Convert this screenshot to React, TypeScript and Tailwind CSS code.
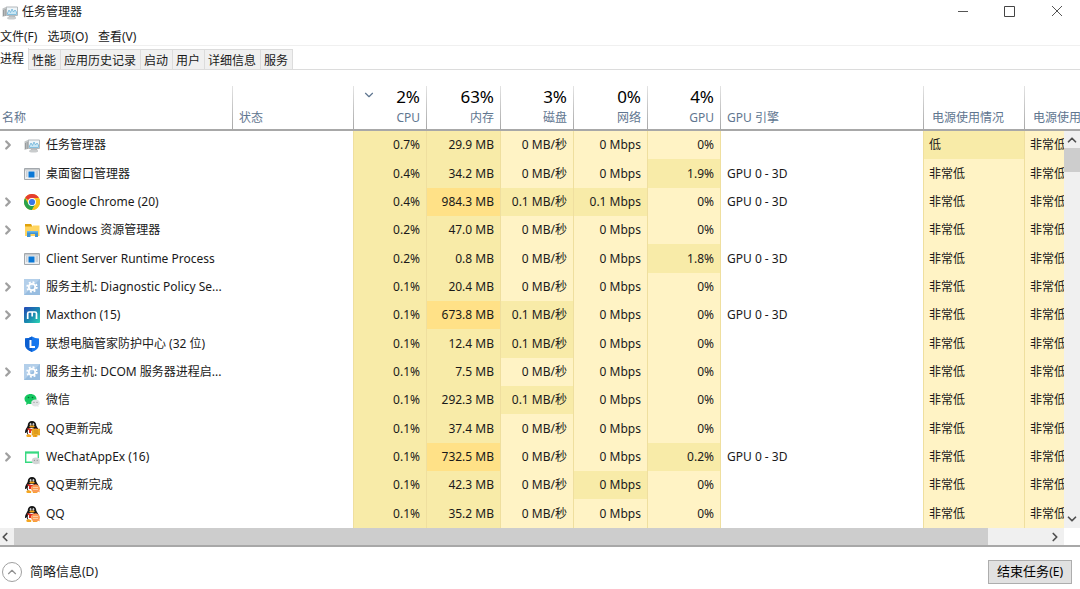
import { ReactNode } from "react";
import clsx from "clsx";
import { ChevronDown, ChevronLeft, ChevronRight, ChevronUp } from "lucide-react";

type Heat = "low" | "mid" | "high";

interface Process {
    name: string;
    icon: keyof typeof icons;
    expandable?: boolean;
    cpu: string;
    memory: string;
    disk?: string;
    network?: string;
    networkHeat?: Heat;
    gpu?: string;
    engine?: string;
    power?: string;
}

const heatClass: Record<Heat, string> = {
    low: "bg-[#fff3c5]",
    mid: "bg-[#f8eba8]",
    high: "bg-[#ffe187]",
};

const icons = {
    monitor: (
        <>
            <path d="M.5 4.500 5 2.500v9L.5 13z" fill="#c2c5c6" />
            <path d="M1.500 6v6M3.200 5v7" stroke="#8d9294" strokeWidth=".8" />
            <path d="M4.500 3h11v8.500h-11z" fill="#eef5f9" stroke="#b4b9bc" />
            <path d="M5.500 9 7 6l1.500 2.500L10 5l1.500 3 1.500-2 1.500 2v2.500h-9z" fill="#c9e6f4" stroke="#6db3d8" strokeWidth=".8" />
            <path d="M7 12h6l1 2.500H6z" fill="#b5b8ba" />
            <ellipse cx="9.500" cy="14" rx="4.500" ry="1.600" fill="#c9cccd" />
        </>
    ),
    app: (
        <>
            <path d="M.5 2.500h15v11H.5z" fill="#eceef0" stroke="#a3a8ad" />
            <path d="M1 3h14v1.500H1z" fill="#c5c9cc" />
            <path d="M4.500 5.500h6v6h-6z" fill="#0a78d6" />
            <path d="M2 6h1.500M2 8h1.500M2 10h1.500M11.500 6H14M11.500 8H14M11.500 10H14" stroke="#a9b3bc" />
        </>
    ),
    chrome: (
        <>
            <circle cx="8" cy="8" r="8" fill="#f9c41c" />
            <path d="M8 8 1.070 4A8 8 0 0 1 14.930 4H8z" fill="#e53e30" />
            <path d="M1.070 4A8 8 0 0 0 8 16l3.460-6L8 8 4.540 10z" fill="#2ba24c" />
            <path d="M8 4h6.930A8 8 0 0 1 8 16l3.460-6z" fill="#f9c41c" />
            <circle cx="8" cy="8" r="4" fill="#fff" />
            <circle cx="8" cy="8" r="3.100" fill="#3b78e7" />
        </>
    ),
    folder: (
        <>
            <path d="M1 2h6l1 1.500V6H1z" fill="#e0a20c" />
            <path d="M1 4.500h7L9 3.500h6.500V14H1z" fill="#ffd560" />
            <path d="M3 9h11v6h-3v-3H6.500v3H3z" fill="#3f93d3" />
            <path d="M3 9h11v1.500H3z" fill="#69b7ea" />
        </>
    ),
    gear: (
        <>
            <path d="M0 0h16v16H0z" fill="#b3cfea" />
            <path d="M0 16 16 0v16z" fill="#98bde0" />
            <circle cx="8" cy="8" r="3.200" fill="none" stroke="#fff" strokeWidth="1.700" />
            <circle cx="8" cy="8" r="4.800" fill="none" stroke="#fff" strokeWidth="1.800" strokeDasharray="1.885 1.885" />
        </>
    ),
    maxthon: (
        <>
            <defs>
                <linearGradient id="maxthon" x1="0" x2="1" y1="0" y2="1">
                    <stop stopColor="#2448b8" />
                    <stop offset=".55" stopColor="#198aae" />
                    <stop offset="1" stopColor="#2bd6b4" />
                </linearGradient>
            </defs>
            <rect width="16" height="16" rx="1" fill="url(#maxthon)" />
            <path d="M3.700 12V6.500Q3.700 5 5.200 5h5.800q1.500 0 1.500 1.500V12M8.200 5v4.500" fill="none" stroke="#fff" strokeWidth="1.700" />
        </>
    ),
    shield: (
        <>
            <path d="M8 .5Q11 2.500 15 2.500V8q0 5.500-7 8-7-2.500-7-8V2.500Q5 2.500 8 .5" fill="#1677ee" />
            <path d="M8 .5Q5 2.500 1 2.500V8q0 5.500 7 8z" fill="#0c5fd0" />
            <path d="M6.500 4v7H11" fill="none" stroke="#fff" strokeWidth="2" />
        </>
    ),
    wechat: (
        <>
            <path d="M6.500 2C3 2 .5 4.200.5 7q0 2.400 2 3.800L2 13l2.500-1.200q1 .3 2 .3c3.500 0 6-2.300 6-5.100S10 2 6.500 2" fill="#16c761" />
            <circle cx="4.500" cy="5.500" r=".8" fill="#0a6b35" />
            <circle cx="8.500" cy="5.500" r=".8" fill="#0a6b35" />
            <path d="M11.500 7.500C9 7.500 7.200 9 7.200 11s1.800 3.400 4.300 3.400l1.500-.2 1.700.8-.4-1.400q1.500-1 1.500-2.600c0-2-1.800-3.500-4.300-3.500" fill="#e1e3e4" />
            <circle cx="10" cy="10.300" r=".6" fill="#888" />
            <circle cx="13" cy="10.300" r=".6" fill="#888" />
        </>
    ),
    webview: (
        <>
            <path d="M9 13.200H1.700V3.500h12.600V9" fill="none" stroke="#37d980" strokeWidth="1.400" />
            <path d="M1 2.500h14v2H1z" fill="#37d980" />
            <ellipse cx="11.800" cy="11.800" rx="4" ry="3.400" fill="#d2d5d5" />
            <path d="m14 14 1.500 1.500V13z" fill="#d2d5d5" />
            <circle cx="10.400" cy="11.300" r=".6" fill="#8b8f8f" />
            <circle cx="13.200" cy="11.300" r=".6" fill="#8b8f8f" />
        </>
    ),
    qqFile: (
        <>
            <Penguin />
            <path d="M8 8h8v6h-3l-1.500 1.500V14H8z" fill="#f5b52b" stroke="#c98512" strokeWidth=".5" />
            <path d="M9.500 10h5M9.500 12h5" stroke="#b97609" strokeWidth=".8" />
        </>
    ),
    qqChat: (
        <>
            <Penguin />
            <ellipse cx="11.500" cy="11.500" rx="4.500" ry="4" fill="#fb9a55" />
            <path d="m13 14 3 1.500-1-3z" fill="#fb9a55" />
            <path d="M9 10.500h5M9 12.500h5" stroke="#ffd9b8" strokeWidth=".8" />
        </>
    ),
};

function Penguin() {
    return (
        <>
            <path d="M8 0C5.500 0 3.700 2 3.700 4.800 3 6.500.8 9 1 11.500c.2 1.200 1.200 0 1.500-.5q.5 2 1.500 3h7.500q1.500-1 2-3c.5.600 1.300 1.200 1.500.3.200-2.600-2-5-2.700-6.500C12.300 2 10.500 0 8 0" fill="#151515" />
            <ellipse cx="7.500" cy="11" rx="3.800" ry="4" fill="#fff" />
            <ellipse cx="6.600" cy="3.400" rx=".9" ry="1.300" fill="#ccc" />
            <ellipse cx="9.400" cy="3.400" rx=".9" ry="1.300" fill="#ccc" />
            <ellipse cx="8" cy="5.600" rx="2.800" ry="1" fill="#f5a51d" />
            <path d="M3.500 7q4.500 2 9 0v2q-3 1-5.500.7V12H5V9.200L3.300 8.500z" fill="#e02b22" />
            <path d="M2.500 14q2-1.500 5 .5L7 16H3.500Q1.500 15.500 2.500 14M8.500 14.500q3-1.500 5 0 .5 1.500-1.500 1.500H9z" fill="#f5a51d" />
        </>
    );
}

const processes: Process[] = [
    { name: "任务管理器", icon: "monitor", expandable: true, cpu: "0.7%", memory: "29.9 MB", power: "低" },
    { name: "桌面窗口管理器", icon: "app", cpu: "0.4%", memory: "34.2 MB", gpu: "1.9%", engine: "GPU 0 - 3D" },
    { name: "Google Chrome (20)", icon: "chrome", expandable: true, cpu: "0.4%", memory: "984.3 MB", disk: "0.1 MB/秒", network: "0.1 Mbps", networkHeat: "mid", engine: "GPU 0 - 3D" },
    { name: "Windows 资源管理器", icon: "folder", expandable: true, cpu: "0.2%", memory: "47.0 MB" },
    { name: "Client Server Runtime Process", icon: "app", cpu: "0.2%", memory: "0.8 MB", gpu: "1.8%", engine: "GPU 0 - 3D" },
    { name: "服务主机: Diagnostic Policy Se...", icon: "gear", expandable: true, cpu: "0.1%", memory: "20.4 MB" },
    { name: "Maxthon (15)", icon: "maxthon", expandable: true, cpu: "0.1%", memory: "673.8 MB", disk: "0.1 MB/秒", engine: "GPU 0 - 3D" },
    { name: "联想电脑管家防护中心 (32 位)", icon: "shield", cpu: "0.1%", memory: "12.4 MB", disk: "0.1 MB/秒" },
    { name: "服务主机: DCOM 服务器进程启...", icon: "gear", expandable: true, cpu: "0.1%", memory: "7.5 MB" },
    { name: "微信", icon: "wechat", cpu: "0.1%", memory: "292.3 MB", disk: "0.1 MB/秒" },
    { name: "QQ更新完成", icon: "qqFile", cpu: "0.1%", memory: "37.4 MB" },
    { name: "WeChatAppEx (16)", icon: "webview", expandable: true, cpu: "0.1%", memory: "732.5 MB", gpu: "0.2%", engine: "GPU 0 - 3D" },
    { name: "QQ更新完成", icon: "qqChat", cpu: "0.1%", memory: "42.3 MB", networkHeat: "mid" },
    { name: "QQ", icon: "qqChat", cpu: "0.1%", memory: "35.2 MB" },
];

const menus = ["文件(F)", "选项(O)", "查看(V)"];
const tabs = ["进程", "性能", "应用历史记录", "启动", "用户", "详细信息", "服务"];

function Icon({ name }: { name: keyof typeof icons }) {
    return (
        <svg viewBox="0 0 16 16" className="size-4 shrink-0" aria-hidden="true">
            {icons[name]}
        </svg>
    );
}

function HeaderCell({ label, total, sorted, className }: { label: string; total?: string; sorted?: boolean; className?: string }) {
    return (
        <th scope="col" className="group relative h-[45px] border-b-2 border-[#a8a8a8] p-0 align-bottom font-normal">
            <div
                className={clsx(
                    "flex flex-col whitespace-nowrap text-[#5f7690]",
                    total ? "items-end pr-[7px]" : "items-start",
                    className
                )}
            >
                {total && <span className="text-[17px] leading-[21px] text-black">{total}</span>}
                <span className="leading-[22px]">{label}</span>
            </div>
            {sorted && <ChevronDown className="absolute left-2 top-0.5 size-3.5 text-[#5f7690]" strokeWidth={2} />}
            <span className="absolute right-0 top-0 h-full w-px bg-linear-to-b from-[#e4e4e4] to-[#a8a8a8] group-last:hidden" />
        </th>
    );
}

function HeatCell({ heat, left, children }: { heat: Heat; left?: boolean; children: ReactNode }) {
    return (
        <td
            className={clsx(
                "overflow-hidden whitespace-nowrap border-r border-r-[#efdf9f] py-0",
                left ? "px-[5px] text-left" : "px-1.5 text-right",
                heatClass[heat]
            )}
        >
            {children}
        </td>
    );
}

function ProcessRow({ process }: { process: Process }) {
    const { disk = "0 MB/秒", network = "0 Mbps", gpu = "0%", power = "非常低" } = process;
    const big = parseFloat(process.memory) > 500;

    return (
        <tr>
            <td className="p-0">
                <div className="flex items-center whitespace-nowrap">
                    <div className="flex w-6 shrink-0 items-center">
                        {process.expandable && (
                            <button type="button" aria-label="展开" className="pl-px text-[#a0a0a0]">
                                <ChevronRight className="size-3.5" strokeWidth={4} />
                            </button>
                        )}
                    </div>
                    <Icon name={process.icon} />
                    <span className="ml-1.5">{process.name}</span>
                </div>
            </td>
            <td className="border-r border-r-[#efdf9f] p-0" />
            <HeatCell heat="mid">{process.cpu}</HeatCell>
            <HeatCell heat={big ? "high" : "mid"}>{process.memory}</HeatCell>
            <HeatCell heat={process.disk ? "mid" : "low"}>{disk}</HeatCell>
            <HeatCell heat={process.networkHeat ?? "low"}>{network}</HeatCell>
            <HeatCell heat={process.gpu ? "mid" : "low"}>{gpu}</HeatCell>
            <td className="border-r border-r-[#efdf9f] px-1.5 py-0">{process.engine}</td>
            <HeatCell heat={process.power ? "mid" : "low"} left>{power}</HeatCell>
            <HeatCell heat="low" left>非常低</HeatCell>
        </tr>
    );
}

export default function App() {
    return (
        <div className="flex h-screen flex-col overflow-hidden bg-white font-['Noto_Sans','Noto_Sans_CJK_SC',sans-serif] text-xs text-[#1a1a1a]">
            <header className="flex h-6 shrink-0 items-center pl-0.5">
                <Icon name="monitor" />
                <h1 className="ml-1 grow">任务管理器</h1>
                <button type="button" aria-label="最小化" className="flex w-[47px] justify-center">
                    <svg viewBox="0 0 12 12" className="size-3" stroke="#555"><path d="M1 5.500h10" /></svg>
                </button>
                <button type="button" aria-label="最大化" className="flex w-[47px] justify-center">
                    <svg viewBox="0 0 12 12" className="size-3" fill="none" stroke="#444"><path d="M.5.5h10v10h-10z" /></svg>
                </button>
                <button type="button" aria-label="关闭" className="flex w-[47px] justify-center">
                    <svg viewBox="0 0 12 12" className="size-3" stroke="#555"><path d="m1 0 10 10M11 0 1 10" /></svg>
                </button>
            </header>

            <nav className="flex h-[22px] shrink-0 items-center gap-2.5 border-b border-[#f0f0f0] pt-1">
                {menus.map((menu) => (
                    <button key={menu} type="button">{menu}</button>
                ))}
            </nav>

            <div role="tablist" className="flex h-6 shrink-0 items-end border-b border-[#dcdcdc]">
                {tabs.map((tab, i) => (
                    <button
                        key={tab}
                        type="button"
                        role="tab"
                        aria-selected={i === 0}
                        className={clsx(
                            "border-r border-[#dcdcdc]",
                            i === 0 ? "-mb-px h-[22px] bg-white pr-1" : "h-5 border-t bg-[#f0f0f0] pl-[3px] pr-1 pt-0.5"
                        )}
                    >
                        {tab}
                    </button>
                ))}
            </div>

            <main className="relative mt-4 min-h-0 flex-1 overflow-hidden">
                <table className="h-full w-full min-w-[960px] table-fixed border-separate border-spacing-0">
                    <colgroup>
                        <col className="w-[233px]" />
                        <col className="w-[121px]" />
                        <col className="w-[73px]" />
                        <col className="w-[74px]" />
                        <col className="w-[73px]" />
                        <col className="w-[74px]" />
                        <col className="w-[73px]" />
                        <col />
                        <col className="w-[101px]" />
                        <col className="w-[55px]" />
                    </colgroup>
                    <thead>
                        <tr>
                            <HeaderCell label="名称" className="pl-0.5" />
                            <HeaderCell label="状态" className="pl-1.5" />
                            <HeaderCell label="CPU" total="2%" sorted />
                            <HeaderCell label="内存" total="63%" />
                            <HeaderCell label="磁盘" total="3%" />
                            <HeaderCell label="网络" total="0%" />
                            <HeaderCell label="GPU" total="4%" />
                            <HeaderCell label="GPU 引擎" className="pl-1.5" />
                            <HeaderCell label="电源使用情况" className="pl-2" />
                            <HeaderCell label="电源使用" className="pl-2" />
                        </tr>
                    </thead>
                    <tbody>
                        {processes.map((process, i) => (
                            <ProcessRow key={i} process={process} />
                        ))}
                    </tbody>
                </table>

                <div className="absolute bottom-0 right-0 top-[45px] flex w-4 flex-col items-center bg-[#f0f0f0] text-[#505050]">
                    <button type="button" aria-label="向上滚动" className="pb-px pt-0.5">
                        <ChevronUp className="size-3.5" strokeWidth={3} />
                    </button>
                    <div className="h-6 w-full bg-[#cdcdcd]" />
                    <button type="button" aria-label="向下滚动" className="mt-auto py-0.5">
                        <ChevronDown className="size-3.5" strokeWidth={3} />
                    </button>
                </div>
            </main>

            <div className="flex h-[19px] shrink-0 border-b-2 border-[#a8a8a8] pr-4 text-[#505050]">
                <div className="flex grow bg-[#f0f0f0]">
                    <button type="button" aria-label="向左滚动" className="w-3.5">
                        <ChevronLeft className="-ml-0.5 size-3.5" strokeWidth={3} />
                    </button>
                    <div className="grow bg-[#cdcdcd]" />
                    <button type="button" aria-label="向右滚动" className="flex w-[76px] items-center justify-end pr-0.5">
                        <ChevronRight className="size-3.5" strokeWidth={3} />
                    </button>
                </div>
            </div>

            <footer className="flex h-[42px] shrink-0 items-center justify-between pb-1 pl-0.5 pr-2 pt-3 text-[13px]">
                <button type="button" className="flex items-center gap-2">
                    <span className="flex size-5 items-center justify-center rounded-full border border-[#a0a0a0] text-[#909090]">
                        <ChevronUp className="size-3.5" strokeWidth={2} />
                    </span>
                    <span>简略信息<span className="text-xs">(D)</span></span>
                </button>
                <button type="button" className="h-6 border border-[#adadad] bg-[#e1e1e1] px-2 text-black">
                    结束任务<span className="text-xs">(E)</span>
                </button>
            </footer>
        </div>
    );
}
